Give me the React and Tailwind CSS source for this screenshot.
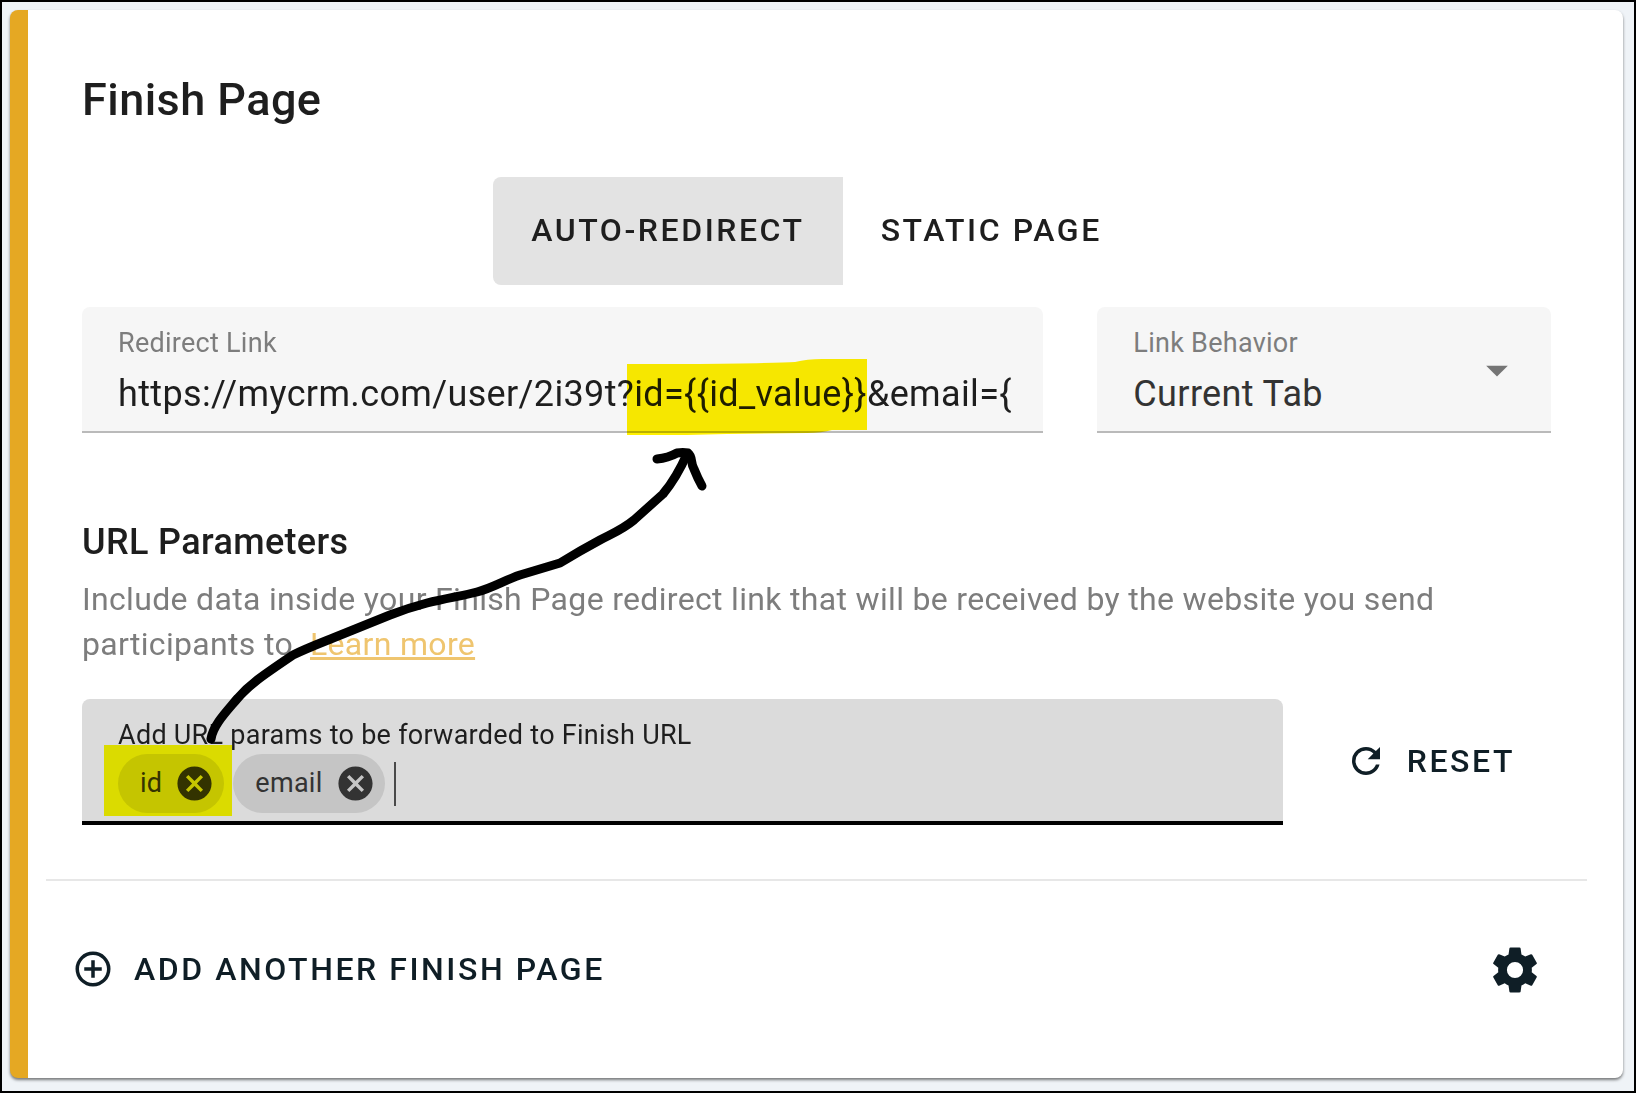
import { useState } from "react";

const ICONS = {
  plusCircle:
    "M12,20C7.59,20 4,16.41 4,12C4,7.59 7.59,4 12,4C16.41,4 20,7.59 20,12C20,16.41 16.41,20 12,20M12,2A10,10 0 0,0 2,12A10,10 0 0,0 12,22A10,10 0 0,0 22,12A10,10 0 0,0 12,2M13,7H11V11H7V13H11V17H13V13H17V11H13V7Z",
  refresh:
    "M17.65,6.35C16.2,4.9 14.21,4 12,4A8,8 0 0,0 4,12A8,8 0 0,0 12,20C15.73,20 18.84,17.45 19.73,14H17.65C16.83,16.33 14.61,18 12,18A6,6 0 0,1 6,12A6,6 0 0,1 12,6C13.66,6 15.14,6.69 16.22,7.78L13,11H20V4L17.65,6.35Z",
  cog: "M12,15.6A3.6,3.6 0 0,1 8.4,12A3.6,3.6 0 0,1 12,8.4A3.6,3.6 0 0,1 15.6,12A3.6,3.6 0 0,1 12,15.6M19.43,12.97C19.47,12.65 19.5,12.33 19.5,12C19.5,11.67 19.47,11.34 19.43,11L21.54,9.37C21.73,9.22 21.78,8.95 21.66,8.73L19.66,5.27C19.54,5.05 19.27,4.96 19.05,5.05L16.56,6.05C16.04,5.66 15.5,5.32 14.87,5.07L14.5,2.42C14.46,2.18 14.25,2 14,2H10C9.75,2 9.54,2.18 9.5,2.42L9.13,5.07C8.5,5.32 7.96,5.66 7.44,6.05L4.95,5.05C4.73,4.96 4.46,5.05 4.34,5.27L2.34,8.73C2.21,8.95 2.27,9.22 2.46,9.37L4.57,11C4.53,11.34 4.5,11.67 4.5,12C4.5,12.33 4.53,12.65 4.57,12.97L2.46,14.63C2.27,14.78 2.21,15.05 2.34,15.27L4.34,18.73C4.46,18.95 4.73,19.03 4.95,18.95L7.44,17.94C7.96,18.34 8.5,18.68 9.13,18.93L9.5,21.58C9.54,21.82 9.75,22 10,22H14C14.25,22 14.46,21.82 14.5,21.58L14.87,18.93C15.5,18.67 16.04,18.34 16.56,17.94L19.05,18.95C19.27,19.03 19.54,18.95 19.66,18.73L21.66,15.27C21.78,15.05 21.73,14.78 21.54,14.63L19.43,12.97Z",
  closeCircle:
    "M12,2C17.53,2 22,6.47 22,12C22,17.53 17.53,22 12,22C6.47,22 2,17.53 2,12C2,6.47 6.47,2 12,2M15.59,7L12,10.59L8.41,7L7,8.41L10.59,12L7,15.59L8.41,17L12,13.41L15.59,17L17,15.59L13.41,12L17,8.41L15.59,7Z",
  menuDown: "M7,10L12,15L17,10H7Z",
};

const Icon = ({ name, className }) => (
  <svg viewBox="0 0 24 24" fill="currentColor" className={className} aria-hidden="true">
    <path d={ICONS[name]} />
  </svg>
);

// Chip with a remove button
const Chip = ({ label, onRemove }) => (
  <span className="flex items-center h-[59px] rounded-full bg-[#c5c5c5] pl-[22px] pr-[9px] text-[27px] tracking-[0.01em] text-[#333333]">
    {label}
    <button
      type="button"
      aria-label={`Remove ${label}`}
      onClick={onRemove}
      className="ml-3 cursor-pointer"
    >
      <Icon name="closeCircle" className="w-[41px] h-[41px]" />
    </button>
  </span>
);

export default function App() {
  const [mode, setMode] = useState("auto");
  const [link, setLink] = useState(
    "https://mycrm.com/user/2i39t?id={{id_value}}&email={"
  );
  const [behavior, setBehavior] = useState("Current Tab");
  const [params, setParams] = useState(["id", "email"]);
  const [draft, setDraft] = useState("");

  const removeParam = (name) => setParams(params.filter((p) => p !== name));

  const handleKeyDown = (e) => {
    if (e.key === "Enter" && draft.trim()) {
      setParams([...params, draft.trim()]);
      setDraft("");
    }
  };

  const tabClass = (active) =>
    `h-[108px] px-[38px] pb-0.5 cursor-pointer ${active ? "bg-[#e3e3e3]" : "bg-white"}`;

  return (
    <div className="min-h-screen flex border-2 border-black bg-[#eff3f7] pl-2 pr-[11px] pt-2 pb-[13px] font-[Roboto,sans-serif] text-[#1e1e1e]">
      <main className="relative flex-1 rounded-lg border-l-[18px] border-[#e5a823] bg-white shadow-[0_2px_3px_rgba(0,0,0,0.5)]">
        <div className="pl-[54px] pr-[72px] pt-[63px]">
          <h1 className="text-[45px] leading-[54px] font-medium tracking-[0.01em]">
            Finish Page
          </h1>

          <div className="mt-[50px] flex justify-center text-[32px] font-medium tracking-[0.08em]">
            <div className="flex rounded-lg overflow-hidden">
              <button
                type="button"
                onClick={() => setMode("auto")}
                className={tabClass(mode === "auto")}
              >
                AUTO-REDIRECT
              </button>
              <button
                type="button"
                onClick={() => setMode("static")}
                className={tabClass(mode === "static")}
              >
                STATIC PAGE
              </button>
            </div>
          </div>

          <div className="mt-[22px] grid grid-cols-12 gap-x-[54px]">
            <div className="relative col-span-8 h-[126px] rounded-t-lg border-b-2 border-[#bababa] bg-[#f6f6f6] pl-9 pr-8 pt-5">
              <label
                htmlFor="redirect-link"
                className="block text-[27px] leading-8 tracking-[0.01em] text-[#7d7d7d]"
              >
                Redirect Link
              </label>
              <input
                id="redirect-link"
                type="text"
                value={link}
                onChange={(e) => setLink(e.target.value)}
                className="mt-[13px] block w-full h-11 text-[36px] leading-[44px] tracking-[0.01em] outline-none"
              />
              <svg
                viewBox="0 0 240 76"
                className="absolute left-[545px] top-[52px] w-60 h-[76px] mix-blend-multiply pointer-events-none"
              >
                <path
                  d="M0 5 L60 5 Q150 4 168 3 Q180 0 195 0 L240 0 V71 L205 71 Q195 74 180 74 L100 75 L60 76 H0Z"
                  fill="#fff000"
                />
              </svg>
            </div>

            <div className="relative col-span-4 h-[126px] rounded-t-lg border-b-2 border-[#bababa] bg-[#f6f6f6] pl-9 pr-8 pt-5">
              <label
                htmlFor="link-behavior"
                className="block text-[27px] leading-8 tracking-[0.01em] text-[#7d7d7d]"
              >
                Link Behavior
              </label>
              <select
                id="link-behavior"
                value={behavior}
                onChange={(e) => setBehavior(e.target.value)}
                className="mt-[13px] block w-full h-11 appearance-none text-[36px] leading-[44px] tracking-[0.01em] text-[#333333] outline-none"
              >
                <option>Current Tab</option>
                <option>New Tab</option>
              </select>
              <Icon
                name="menuDown"
                className="absolute right-7 top-[37px] w-[52px] h-[52px] text-[#757575] pointer-events-none"
              />
            </div>
          </div>

          <h2 className="mt-[87px] text-[36px] leading-[44px] font-medium tracking-[0.01em]">
            URL Parameters
          </h2>
          <p className="mt-[13px] text-[32px] leading-[45px] tracking-[0.01em] text-[#7d7d7d]">
            Include data inside your Finish Page redirect link that will be
            received by the website you send participants to.{" "}
            <a href="#learn-more" className="text-[#efc56f] underline">
              Learn more
            </a>
          </p>

          <div className="mt-8 flex items-center">
            <div className="flex-1 h-[126px] rounded-t-lg border-b-4 border-black bg-[#dbdbdb] px-9 pt-5">
              <label
                htmlFor="url-params"
                className="block text-[27px] leading-8 tracking-[0.01em]"
              >
                Add URL params to be forwarded to Finish URL
              </label>
              <div className="mt-[3px] flex items-center gap-[9px]">
                {params.map((name) => (
                  <div key={name} className="relative">
                    <Chip label={name} onRemove={() => removeParam(name)} />
                    {name === "id" && (
                      <span className="absolute -left-[14px] -right-2 -top-[9px] -bottom-[3px] bg-[#ffff00] mix-blend-multiply pointer-events-none" />
                    )}
                  </div>
                ))}
                <input
                  id="url-params"
                  type="text"
                  value={draft}
                  onChange={(e) => setDraft(e.target.value)}
                  onKeyDown={handleKeyDown}
                  className="flex-1 min-w-0 h-11 border-l-2 border-[#4a4a4a] text-[36px] outline-none"
                />
              </div>
            </div>
            <button
              type="button"
              onClick={() => setParams([])}
              className="ml-[62px] mr-9 mb-0.5 flex items-center gap-5 text-[32px] font-medium tracking-[0.08em] text-[#0f1e26] cursor-pointer"
            >
              <Icon name="refresh" className="w-[42px] h-[42px]" />
              RESET
            </button>
          </div>
        </div>

        <hr className="mt-[54px] ml-[18px] mr-9 border-t-2 border-[#e7e7e7]" />

        <div className="mt-[62px] mb-[78px] pl-11 pr-[81px] flex items-center justify-between text-[#0f1e26]">
          <button
            type="button"
            className="mb-0.5 flex items-center gap-5 text-[32px] font-medium tracking-[0.08em] cursor-pointer"
          >
            <Icon name="plusCircle" className="w-[42px] h-[42px]" />
            ADD ANOTHER FINISH PAGE
          </button>
          <button type="button" aria-label="Settings" className="cursor-pointer">
            <Icon name="cog" className="w-[54px] h-[54px]" />
          </button>
        </div>

        {/* Arrow from the id chip to its place in the link */}
        <svg
          viewBox="200 440 520 310"
          fill="none"
          stroke="#000000"
          strokeWidth="9"
          strokeLinecap="round"
          strokeLinejoin="round"
          className="absolute left-[172px] top-[430px] w-[520px] h-[310px] pointer-events-none"
        >
          <path d="M211 739 C213 725 227 711 237 699 C250 684 262 676 293 655 C305 649 318 644 333 638 L390 615 Q408 608 427 603 C447 598 462 596 477 592 C492 588 505 580 520 575 L560 563 C573 555 587 547 600 540 C611 534 622 530 634 520 L663 494 C673 482 680 470 687 454" />
          <path d="M657 459 Q668 458 677 453 Q683 452 688 453 C693 457 690 462 694 469 Q698 479 702 486" />
        </svg>
      </main>
    </div>
  );
}
